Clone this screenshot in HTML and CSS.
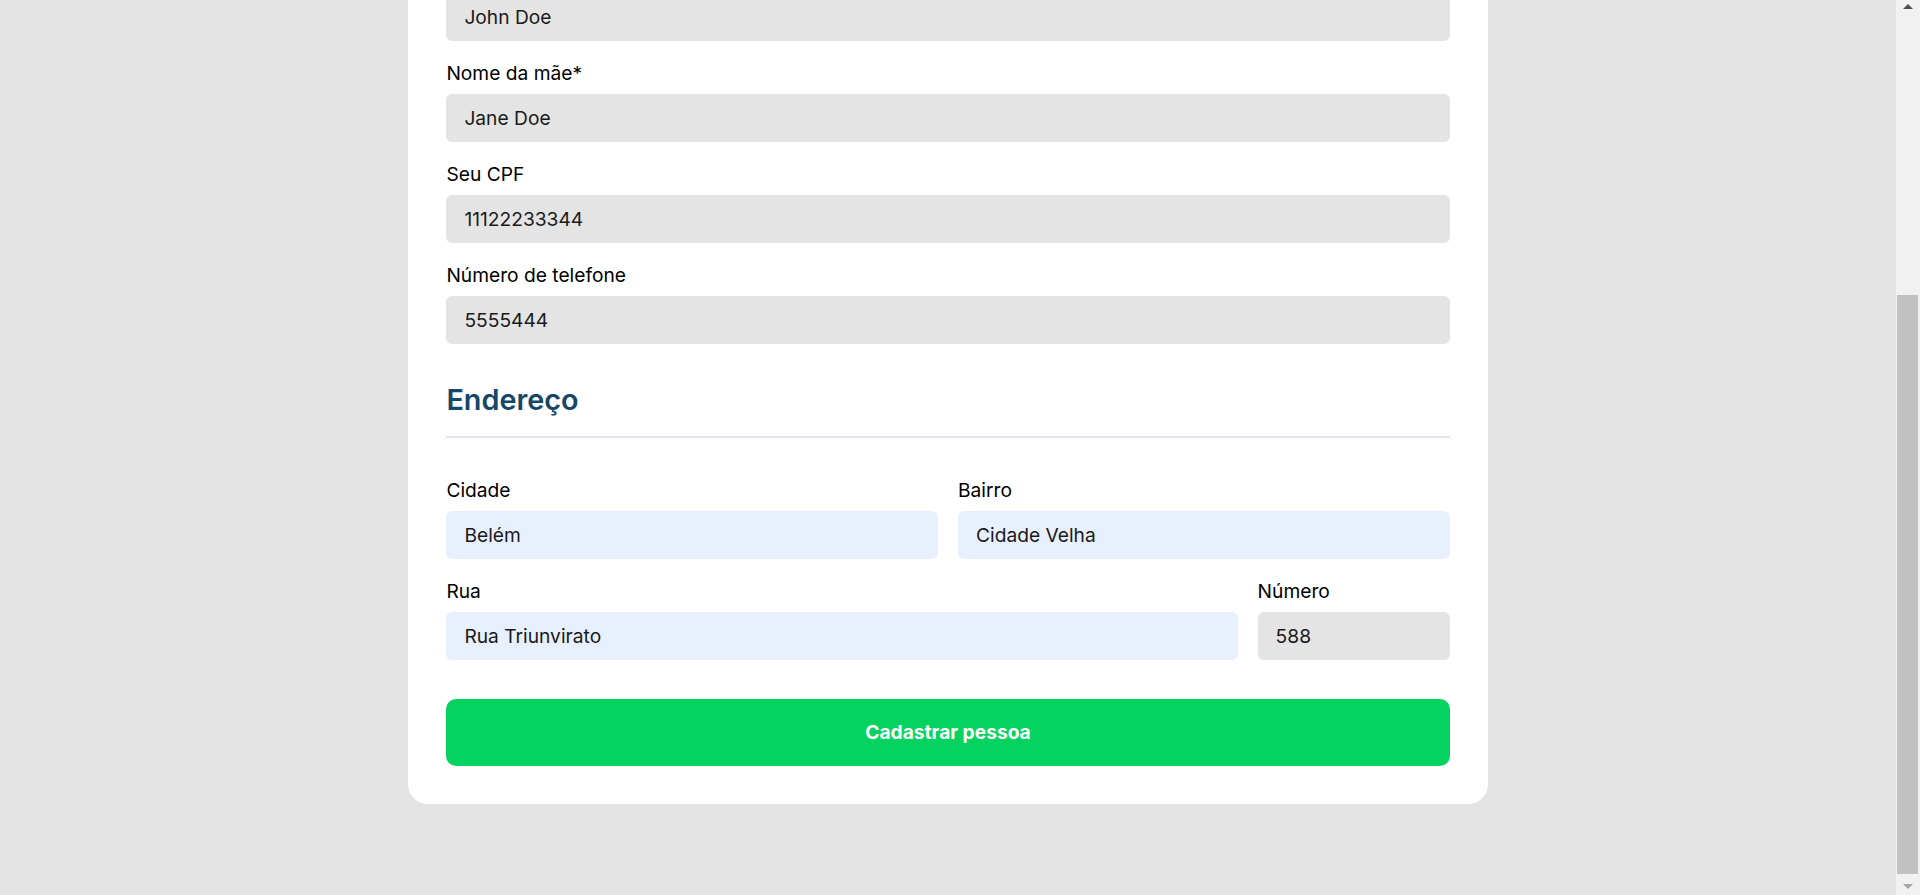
FILE: index.html
```html
<!DOCTYPE html>
<html lang="pt-BR">
<head>
<meta charset="utf-8">
<title>Cadastro de pessoa</title>
<link rel="stylesheet" href="styles.css">
</head>
<body>
<div class="app">
  <main class="viewport">
    <div class="page">
      <form class="card">
        <h2 class="section-title">Dados pessoais</h2>
        <div class="fields">
          <div class="field">
            <label class="label" for="nome">Nome completo*</label>
            <input class="input" id="nome" value="John Doe">
          </div>
          <div class="field">
            <label class="label" for="mae">Nome da mãe*</label>
            <input class="input" id="mae" value="Jane Doe">
          </div>
          <div class="field">
            <label class="label" for="cpf">Seu CPF</label>
            <input class="input" id="cpf" value="11122233344">
          </div>
          <div class="field">
            <label class="label" for="tel">Número de telefone</label>
            <input class="input" id="tel" value="5555444">
          </div>
        </div>

        <h2 class="section-title">Endereço</h2>
        <div class="fields">
          <div class="row row-half">
            <div class="field">
              <label class="label" for="cidade">Cidade</label>
              <input class="input input-filled" id="cidade" value="Belém">
            </div>
            <div class="field">
              <label class="label" for="bairro">Bairro</label>
              <input class="input input-filled" id="bairro" value="Cidade Velha">
            </div>
          </div>
          <div class="row row-street">
            <div class="field">
              <label class="label" for="rua">Rua</label>
              <input class="input input-filled" id="rua" value="Rua Triunvirato">
            </div>
            <div class="field">
              <label class="label" for="numero">Número</label>
              <input class="input" id="numero" value="588">
            </div>
          </div>
        </div>

        <button class="submit" type="button">Cadastrar pessoa</button>
      </form>
    </div>
  </main>
  <div class="scrollbar">
    <div class="scroll-arrow scroll-up"></div>
    <div class="scroll-track">
      <div class="scroll-thumb"></div>
    </div>
    <div class="scroll-arrow scroll-down"></div>
  </div>
</div>
</body>
</html>
```

FILE: styles.css
```css
* {
  box-sizing: border-box;
}

html, body {
  margin: 0;
  height: 100%;
}

body {
  background: #e4e4e4;
  font-family: Inter, "Noto Sans", "Liberation Sans", sans-serif;
  color: #000000;
  overflow: hidden;
}

.app {
  display: flex;
  height: 100vh;
}

.viewport {
  flex: 1;
  display: flex;
  flex-direction: column;
  justify-content: flex-end;
  overflow: hidden;
}

.page {
  flex-shrink: 0;
  display: flex;
  justify-content: center;
  padding: 96px 0 91px;
}

.card {
  width: 1080px;
  background: #ffffff;
  border-radius: 20px;
  padding: 38.4px;
  display: flex;
  flex-direction: column;
}

.section-title {
  margin: 38.4px 0 40px;
  padding-bottom: 20px;
  border-bottom: 2px solid #e4e4ef;
  font-size: 28.8px;
  line-height: 33.6px;
  font-weight: 600;
  color: #154769;
}

.section-title:first-child {
  margin-top: 0;
}

.fields {
  display: flex;
  flex-direction: column;
  gap: 20px;
}

.row {
  display: grid;
  gap: 20px;
}

.row-half {
  grid-template-columns: 1fr 1fr;
}

.row-street {
  grid-template-columns: 1fr 192px;
}

.field {
  display: flex;
  flex-direction: column;
  min-width: 0;
}

.label {
  font-size: 19.2px;
  line-height: 24px;
  font-weight: 400;
  color: #000000;
  margin-bottom: 9px;
}

.input {
  height: 48px;
  width: 100%;
  border: none;
  outline: none;
  border-radius: 6px;
  background: #e4e4e4;
  padding: 0 18px;
  font-family: inherit;
  font-size: 19.2px;
  color: #1a1a1a;
}

.input-filled {
  background: #e8f0fe;
}

.submit {
  margin-top: 38.4px;
  height: 67px;
  border: none;
  border-radius: 10px;
  background: #06d35f;
  color: #ffffff;
  font-family: inherit;
  font-size: 19.2px;
  font-weight: 700;
  cursor: pointer;
}

/* window scrollbar (page is scrolled to the end) */
.scrollbar {
  width: 24px;
  flex-shrink: 0;
  background: #f1f1f1;
  display: flex;
  flex-direction: column;
  align-items: center;
}

.scroll-arrow {
  height: 17px;
  width: 100%;
  display: flex;
  justify-content: center;
}

.scroll-up::before,
.scroll-down::before {
  content: "";
  width: 0;
  height: 0;
  border-left: 5px solid transparent;
  border-right: 5px solid transparent;
}

.scroll-up {
  align-items: flex-start;
  padding-top: 4px;
}

.scroll-up::before {
  border-bottom: 5px solid #505050;
}

.scroll-down {
  align-items: flex-end;
  padding-bottom: 6px;
}

.scroll-down::before {
  border-top: 5px solid #a3a3a3;
}

.scroll-track {
  flex: 1;
  width: 100%;
  display: flex;
  flex-direction: column;
  justify-content: flex-end;
  padding: 0 2px 0 1px;
}

.scroll-thumb {
  height: 579px;
  background: #c1c1c1;
  margin-bottom: 4px;
}
```
